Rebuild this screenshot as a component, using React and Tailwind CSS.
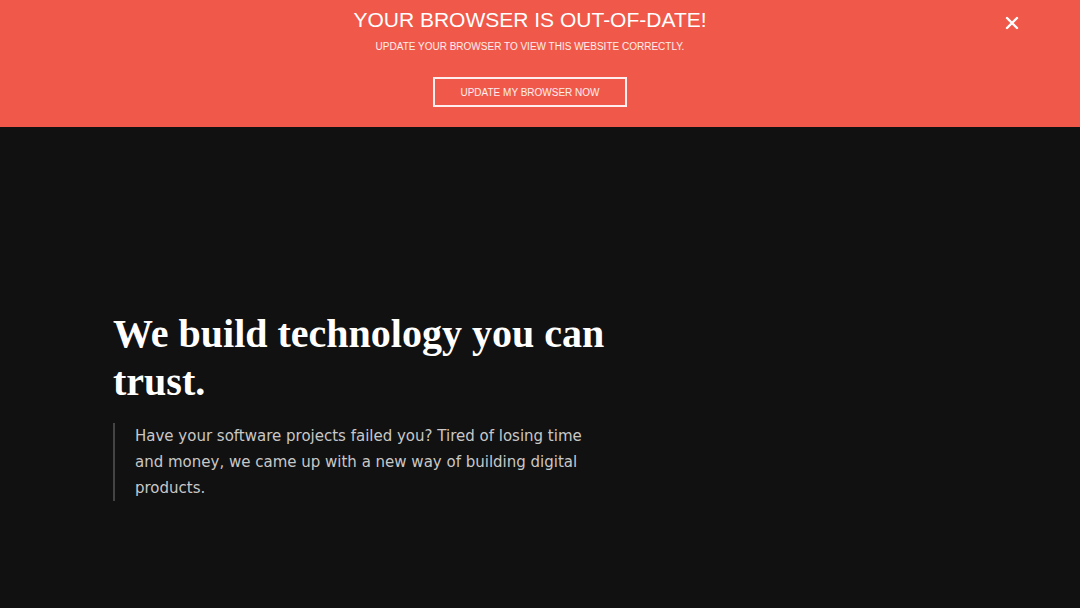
export default function App() {
    return (
        <div className="w-[1080px] h-[608px] overflow-hidden bg-[#111111] flex flex-col">
            <div className="relative h-[127px] bg-[#f0594a] flex flex-col items-center pr-[20px] text-white" style={{ fontFamily: '"Liberation Sans", Arial, sans-serif' }}>
                <h1 className="mt-[8px] text-[21px] leading-[24px]">YOUR BROWSER IS OUT-OF-DATE!</h1>
                <p className="mt-[9px] text-[10px] leading-[12px] text-white/90">UPDATE YOUR BROWSER TO VIEW THIS WEBSITE CORRECTLY.</p>
                <button className="mt-[24px] w-[194px] h-[30px] border-2 border-white/90 text-[10px] text-white/90">UPDATE MY BROWSER NOW</button>
                <button className="absolute right-[59px] top-[14px] w-[18px] h-[18px] flex items-center justify-center">
                    <svg width="14" height="14" viewBox="0 0 14 14" stroke="white" strokeWidth="2.4" strokeLinecap="round">
                        <path d="M2 2 L12 12 M12 2 L2 12" />
                    </svg>
                </button>
            </div>
            <div className="flex-1 pl-[113px] pt-[183px]">
                <h2 className="text-white text-[40px] leading-[48px] font-bold w-[540px]" style={{ fontFamily: '"Liberation Serif", "Times New Roman", serif' }}>
                    We build technology you can trust.
                </h2>
                <div className="mt-[17px] border-l-2 border-[#444] pl-[20px] w-[500px]">
                    <p className="text-[#c8c8c8] text-[15px] leading-[26px]" style={{ fontFamily: '"DejaVu Sans", sans-serif' }}>
                        Have your software projects failed you? Tired of losing time and money, we came up with a new way of building digital products.
                    </p>
                </div>
            </div>
        </div>
    );
}
